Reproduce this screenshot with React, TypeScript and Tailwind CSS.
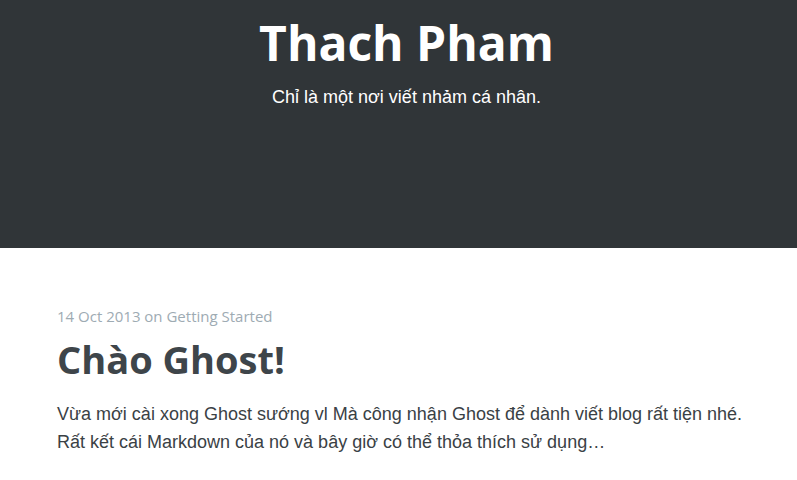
export default function App() {
  return (
    <div className="min-h-[480px] bg-white">
      <header className="h-[248px] bg-[#303538] flex flex-col items-center pl-[16px]">
        <h1 className="mt-[11px] text-[48px] leading-[64px] font-bold text-white font-['Open_Sans',sans-serif]">
          Thach Pham
        </h1>
        <p className="mt-[10px] text-[18px] leading-[24px] text-white font-['Liberation_Sans',Arial,sans-serif]">
          Chỉ là một nơi viết nhảm cá nhân.
        </p>
      </header>
      <main className="pl-[57px] pt-[56px]">
        <div className="text-[15px] leading-[24px] text-[#9eabb3] font-['Open_Sans',sans-serif]">
          14 Oct 2013 on Getting Started
        </div>
        <h2 className="mt-[5px] text-[38px] leading-[52px] font-bold text-[#3e454a] font-['Open_Sans',sans-serif]">
          Chào Ghost!
        </h2>
        <p className="mt-[15px] whitespace-nowrap text-[18px] leading-[28px] text-[#3a4145] font-['Liberation_Sans',Arial,sans-serif]">
          Vừa mới cài xong Ghost sướng vl Mà công nhận Ghost để dành viết blog rất tiện nhé.
          <br />
          Rất kết cái Markdown của nó và bây giờ có thể thỏa thích sử dụng…
        </p>
      </main>
    </div>
  );
}
